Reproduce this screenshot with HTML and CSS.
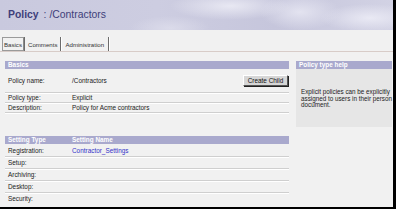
FILE: index.html
```html
<!DOCTYPE html>
<html>
<head>
<meta charset="utf-8">
<link rel="stylesheet" href="styles.css">
</head>
<body>
<div class="frame">
  <div class="header">
    <span class="title-main">Policy</span><span class="title-sub">: /Contractors</span>
  </div>
  <div class="tabs">
    <span class="tab active">Basics</span>
    <span class="tab first">Comments</span>
    <span class="tab wide">Administration</span>
  </div>
  <div class="main">
    <div class="left">
      <div class="bar">Basics</div>
      <div class="row row-tall">
        <span class="label">Policy name:</span>
        <span class="value">/Contractors</span>
        <span class="btn">Create Child</span>
      </div>
      <div class="row">
        <span class="label">Policy type:</span>
        <span class="value">Explicit</span>
      </div>
      <div class="row">
        <span class="label">Description:</span>
        <span class="value">Policy for Acme contractors</span>
      </div>
      <div class="bar bar-settings">
        <span class="label">Setting Type</span>
        <span class="value">Setting Name</span>
      </div>
      <div class="row srow srow-first">
        <span class="label">Registration:</span>
        <span class="value link">Contractor_Settings</span>
      </div>
      <div class="row srow"><span class="label">Setup:</span></div>
      <div class="row srow"><span class="label">Archiving:</span></div>
      <div class="row srow"><span class="label">Desktop:</span></div>
      <div class="row srow last"><span class="label">Security:</span></div>
    </div>
    <div class="right">
      <div class="bar">Policy type help</div>
      <div class="help">Explicit policies can be explicitly assigned to users in their person document.</div>
    </div>
  </div>
</div>
</body>
</html>
```

FILE: styles.css
```css
html, body {
  margin: 0;
  padding: 0;
  background: #f0f0f0;
}
.frame {
  width: 396px;
  height: 209px;
  box-sizing: border-box;
  border-right: 3px solid #000;
  border-bottom: 2px solid #000;
  background: #f1f1f1;
  font-family: "Liberation Sans", Arial, sans-serif;
  font-size: 6.4px;
  color: #222;
  overflow: hidden;
}
.header {
  height: 30px;
  box-sizing: border-box;
  padding: 9px 0 0 8px;
  background:
    radial-gradient(ellipse 60px 14px at 230px 6px, rgba(240,240,248,0.8), rgba(240,240,248,0) 100%),
    radial-gradient(ellipse 40px 18px at 300px 12px, rgba(230,230,242,0.9), rgba(230,230,242,0) 100%),
    radial-gradient(ellipse 50px 14px at 370px 18px, rgba(236,236,246,0.9), rgba(236,236,246,0) 100%),
    radial-gradient(ellipse 40px 12px at 170px 28px, rgba(225,225,238,0.7), rgba(225,225,238,0) 100%),
    linear-gradient(90deg, #c9c9de 0%, #cdcde1 40%, #c6c6dc 70%, #d2d2e4 100%);
  white-space: nowrap;
  line-height: 12px;
}
.title-main {
  font-size: 10.4px;
  font-weight: bold;
  color: #3e3e7a;
}
.title-sub {
  font-size: 10.4px;
  color: #3e3e7a;
  margin-left: 5px;
}
.tabs {
  margin-top: 7px;
  height: 14px;
  display: flex;
  align-items: stretch;
  padding-left: 2px;
  border-bottom: 1px solid #d8ccc8;
  font-size: 6.1px;
}
.tab {
  display: flex;
  align-items: center;
  padding: 0 3px 0 3px;
  border-right: 1px solid #6c6c6c;
  box-shadow: 1px 0 0 #ffffff;
  color: #333;
  white-space: nowrap;
}
.tab.first {
  border-left: 1px solid #6c6c6c;
}
.tab.wide {
  padding: 0 4px 0 4px;
}
.tab.active {
  padding: 0 1px 0 1px;
  border: 1px solid #9a9a9a;
  border-right-color: #8a8a8a;
  box-shadow: none;
  width: 22px;
  box-sizing: border-box;
  justify-content: center;
}
.main {
  display: flex;
  padding: 9px 0 0 5px;
}
.left {
  width: 284px;
  display: flex;
  flex-direction: column;
}
.right {
  width: 96px;
  margin-left: 7px;
  display: flex;
  flex-direction: column;
}
.bar {
  height: 8px;
  line-height: 8px;
  background: #a9a9cd;
  color: #fff;
  font-weight: bold;
  padding-left: 3px;
  display: flex;
  white-space: nowrap;
}
.row {
  display: flex;
  align-items: center;
  height: 9px;
  padding-left: 3px;
  border-bottom: 1px solid #cfcfcf;
  box-shadow: 0 1px 0 #ffffff;
  white-space: nowrap;
}
.row-tall {
  height: 23px;
}
.label {
  width: 64px;
  flex: none;
}
.value {
  flex: 1;
}
.btn {
  flex: none;
  width: 45px;
  height: 11px;
  box-sizing: border-box;
  background: #d6d6d6;
  border: 1px solid #fff;
  border-right-color: #555;
  border-bottom-color: #555;
  box-shadow: 1px 1px 0 #222;
  display: flex;
  align-items: center;
  justify-content: center;
  color: #111;
  margin-right: 1px;
  margin-top: -1px;
}
.bar-settings {
  margin-top: 23px;
  padding-left: 3px;
}
.srow {
  height: 11px;
}
.srow-first {
  height: 12px;
}
.link {
  color: #3434c8;
}
.srow.last {
  border-bottom: none;
  box-shadow: none;
}
.help {
  height: 58px;
  box-sizing: border-box;
  background: #e6e6e6;
  padding: 20px 0 0 5px;
  line-height: 6.6px;
  font-size: 6.3px;
  color: #222;
}
```
